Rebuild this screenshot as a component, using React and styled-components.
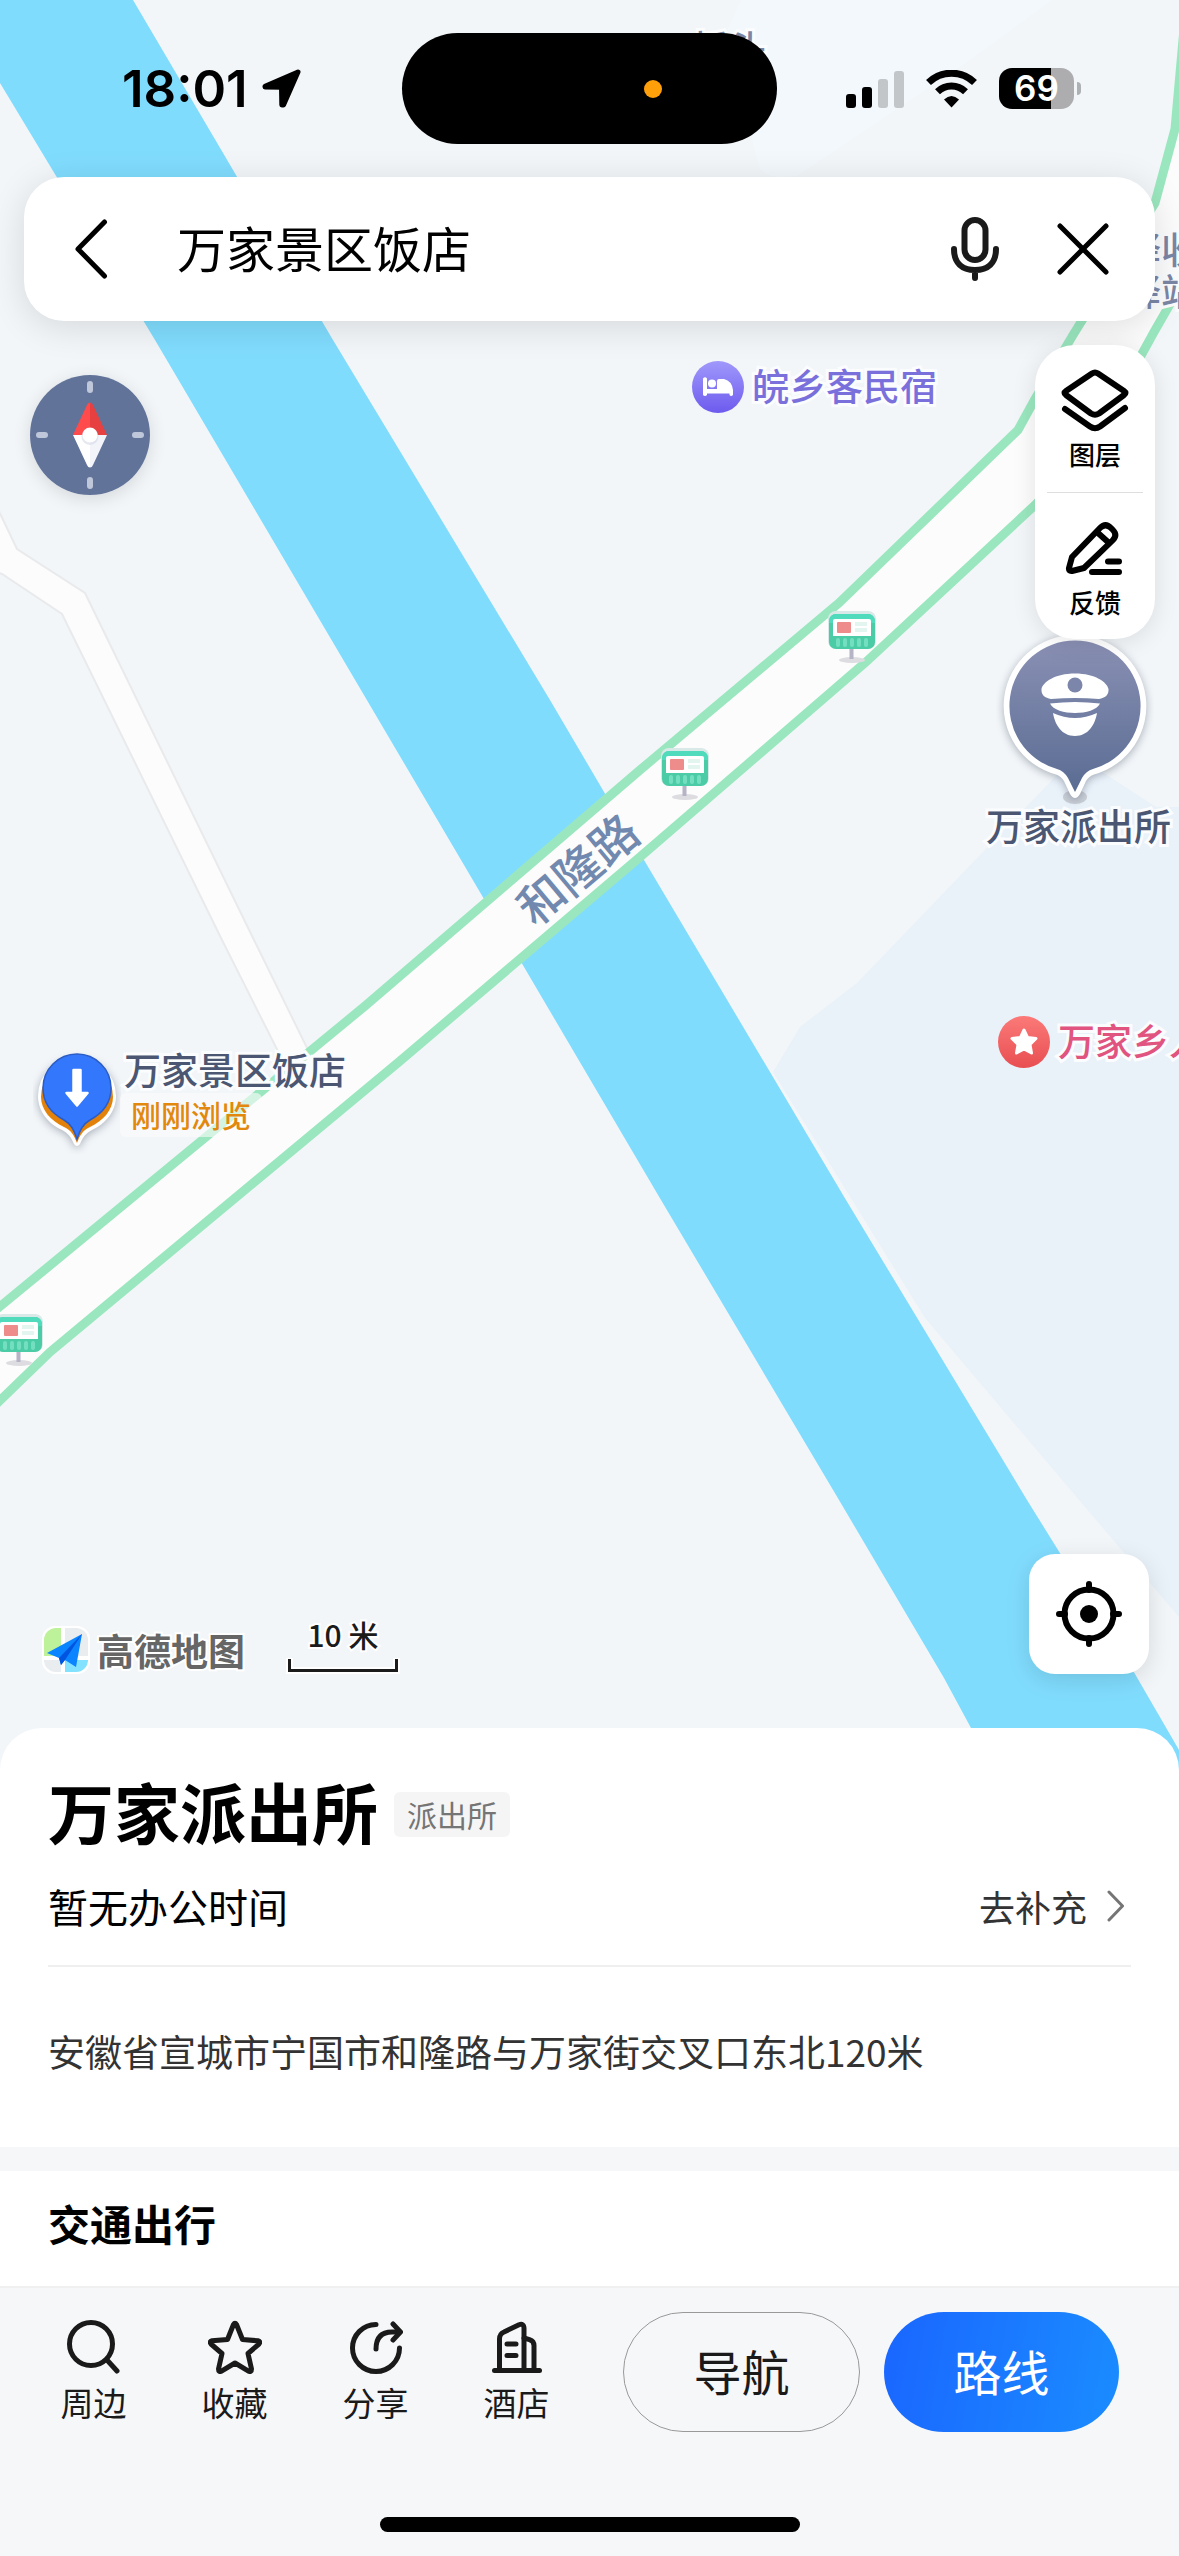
import React from 'react'
import styled, { createGlobalStyle, css } from 'styled-components'

const GlobalStyle = createGlobalStyle`
  *, *::before, *::after {
    box-sizing: border-box;
  }
  body {
    margin: 0;
    background: #f6f7f9;
    color: #000;
    font-family: 'Noto Sans CJK SC', 'Noto Sans', sans-serif;
    overflow-x: hidden;
  }
  button {
    margin: 0;
    padding: 0;
    border: 0;
    background: none;
    color: inherit;
    font: inherit;
    cursor: pointer;
  }
  svg {
    display: block;
    flex: none;
  }
`

const Page = styled.div`
  display: flex;
  flex-direction: column;
  min-height: 100vh;
`

/* ---------- map ---------- */

const MapArea = styled.main`
  position: relative;
  flex: 1;
  display: flex;
  flex-direction: column;
  padding-bottom: 102px;
  overflow: hidden;
  background: #f2f6f9;
`

const MapCanvas = styled.div`
  position: absolute;
  inset: 0;
`

const Terrain = styled.svg`
  width: 100%;
  height: 100%;
`

const Pin = styled.div`
  position: absolute;
  left: ${(p) => p.$x}px;
  top: ${(p) => p.$y}px;
  display: flex;
  align-items: center;
  gap: 8px;
`

const PlaceName = styled.span`
  padding-bottom: 4px;
  color: ${(p) => p.$color || '#4b5772'};
  font-size: 37px;
  font-weight: 500;
  line-height: 42px;
  white-space: nowrap;
  -webkit-text-stroke: 6px #fbfcfe;
  paint-order: stroke fill;
`

const RoadName = styled(PlaceName)`
  position: absolute;
  left: 507px;
  top: 846px;
  font-size: 47px;
  transform: rotate(-40deg);
  -webkit-text-stroke: 0;
`

const VisitedNote = styled.span`
  padding: 0 11px 2px;
  border-radius: 6px;
  background: rgba(252, 252, 252, 0.6);
  color: #e2880c;
  font-size: 30px;
  font-weight: 500;
  line-height: 42px;
`

/* ---------- status bar ---------- */

const StatusBar = styled.header`
  position: relative;
  display: grid;
  grid-template-columns: 1fr 375px 1fr;
  align-items: center;
  height: 177px;
  padding: 33px 0;
`

const Clock = styled.div`
  display: flex;
  align-items: center;
  gap: 14px;
  padding-left: 122px;
  font-family: Inter, 'Liberation Sans', sans-serif;
  font-size: 51px;
  font-weight: 600;
  line-height: 60px;
`

const Island = styled.div`
  display: flex;
  align-items: center;
  justify-content: flex-end;
  height: 111px;
  padding-right: 115px;
  border-radius: 56px;
  background: #000;
`

const RecordDot = styled.i`
  width: 18px;
  height: 18px;
  border-radius: 50%;
  background: #ff9f0a;
`

const Signals = styled.div`
  display: flex;
  align-items: center;
  gap: 22px;
  padding-left: 69px;
`

const Battery = styled.div`
  display: flex;
  align-items: center;
  gap: 3px;
  &::after {
    content: '';
    width: 4px;
    height: 13px;
    border-radius: 0 6px 6px 0;
    background: #aeb1b3;
  }
`

const BatteryBody = styled.div`
  width: 75px;
  height: 41px;
  border-radius: 13px;
  background: linear-gradient(90deg, #000 69%, #adadaf 69%);
  color: #fff;
  font-family: Inter, 'Liberation Sans', sans-serif;
  font-size: 35px;
  font-weight: 600;
  line-height: 41px;
  text-align: center;
`

/* ---------- floating controls ---------- */

const SearchBar = styled.form`
  position: relative;
  display: flex;
  align-items: center;
  height: 144px;
  margin: 0 24px;
  padding: 0 46px 0 51px;
  border-radius: 40px;
  background: #fff;
  box-shadow: 0 6px 36px rgba(0, 0, 0, 0.12);
`

const SearchInput = styled.input`
  flex: 1;
  min-width: 0;
  margin: 0 24px 0 69px;
  padding: 0 0 5px;
  border: 0;
  outline: 0;
  background: none;
  color: #000;
  font-family: inherit;
  font-size: 49px;
  line-height: 72px;
`

const IconButton = styled.button`
  display: flex;
  & + & {
    margin-left: 58px;
  }
`

const ControlsRow = styled.div`
  position: relative;
  display: flex;
  align-items: flex-start;
  justify-content: space-between;
  padding: 24px 24px 0 30px;
`

const CompassButton = styled.button`
  margin-top: 30px;
  border-radius: 50%;
  box-shadow: 0 4px 18px rgba(0, 0, 0, 0.12);
`

const ToolPanel = styled.div`
  display: flex;
  flex-direction: column;
  width: 120px;
  padding: 0 12px;
  border-radius: 40px;
  background: #fff;
  box-shadow: 0 4px 24px rgba(0, 0, 0, 0.1);
`

const ToolButton = styled.button`
  display: flex;
  flex-direction: column;
  align-items: center;
  gap: 4px;
  height: 147px;
  padding-top: 23px;
  font-size: 26px;
  font-weight: 500;
  line-height: 36px;
  & + & {
    border-top: 1px solid #dedede;
  }
`

const ToolIcon = styled.span`
  display: flex;
  align-items: center;
  height: 64px;
`

const MapFooter = styled.div`
  position: relative;
  display: flex;
  align-items: flex-end;
  margin-top: auto;
  padding: 0 30px 0 42px;
`

const Brand = styled.div`
  display: flex;
  align-items: center;
  gap: 7px;
  color: #666;
  font-size: 37px;
  font-weight: 700;
  line-height: 48px;
  -webkit-text-stroke: 4px #fff;
  paint-order: stroke fill;
`

const Scale = styled.div`
  display: flex;
  flex-direction: column;
  align-items: center;
  gap: 4px;
  margin: 0 auto 0 41px;
  color: #1b1b1b;
  font-size: 30px;
  font-weight: 500;
  line-height: 36px;
  -webkit-text-stroke: 4px #fff;
  paint-order: stroke fill;
`

const LocateButton = styled.button`
  display: flex;
  align-items: center;
  justify-content: center;
  width: 120px;
  height: 120px;
  border-radius: 26px;
  background: #fff;
  box-shadow: 0 6px 24px rgba(0, 0, 0, 0.12);
`

/* ---------- place sheet ---------- */

const Sheet = styled.section`
  position: relative;
  margin-top: -48px;
  padding: 42px 48px 68px;
  border-radius: 42px 42px 0 0;
  background: #fff;
`

const TitleRow = styled.div`
  display: flex;
  align-items: center;
  gap: 16px;
`

const Title = styled.h1`
  margin: 0;
  font-size: 66px;
  font-weight: 700;
  line-height: 80px;
`

const Tag = styled.span`
  padding: 0 13px;
  margin-top: 8px;
  border-radius: 6px;
  background: #f5f5f5;
  color: #757575;
  font-size: 30px;
  line-height: 45px;
`

const HoursRow = styled.div`
  display: flex;
  align-items: center;
  justify-content: space-between;
  padding: 28px 0 31px;
  border-bottom: 2px solid #efefef;
  font-size: 40px;
  line-height: 56px;
`

const AddLink = styled.a`
  display: flex;
  align-items: center;
  gap: 20px;
  padding-right: 6px;
  color: #333;
  font-size: 36px;
  text-decoration: none;
`

const Address = styled.p`
  margin: 0;
  padding-top: 56px;
  color: #333;
  font-size: 37px;
  line-height: 56px;
`

const Transit = styled.section`
  padding: 22px 48px 33px;
  border-top: 24px solid #f6f7f9;
  background: #fff;
`

const SectionTitle = styled.h2`
  margin: 0;
  font-size: 42px;
  font-weight: 700;
  line-height: 60px;
`

/* ---------- bottom bar ---------- */

const BottomBar = styled.footer`
  display: flex;
  flex-direction: column;
  align-items: center;
  padding: 24px 0;
  border-top: 2px solid #f0f0f1;
  background: #f6f7f9;
`

const Actions = styled.nav`
  display: flex;
  align-items: flex-start;
  align-self: stretch;
  gap: 24px;
  padding: 0 60px 0 23px;
`

const Tabs = styled.div`
  display: flex;
  width: 576px;
`

const Tab = styled.button`
  display: flex;
  flex-direction: column;
  align-items: center;
  gap: 4px;
  width: 141px;
  padding-top: 8px;
  color: #1a1a1a;
  font-size: 33px;
  line-height: 48px;
`

const PillButton = styled.button`
  flex: 1;
  height: 120px;
  padding-bottom: 5px;
  border-radius: 60px;
  font-size: 48px;
  line-height: 72px;
  ${(p) =>
    p.$primary
      ? css`
          background: linear-gradient(100deg, #1a66ff, #1a8cff);
          color: #fff;
        `
      : css`
          border: 1px solid #999;
          color: #1a1a1a;
        `}
`

const HomeIndicator = styled.div`
  width: 420px;
  height: 15px;
  margin-top: 85px;
  border-radius: 8px;
  background: #000;
`

/* ---------- drawings ---------- */

const Stroke = ({ w, h, width = 5, children, ...rest }) => (
  <svg
    width={w}
    height={h}
    viewBox={`0 0 ${w} ${h}`}
    fill='none'
    stroke='currentColor'
    strokeWidth={width}
    strokeLinecap='round'
    strokeLinejoin='round'
    aria-hidden='true'
    {...rest}
  >
    {children}
  </svg>
)

const NearbyIcon = () => (
  <Stroke w={54} h={54}>
    <circle cx='24' cy='24' r='21.5' />
    <path d='M40 40 50 51' />
  </Stroke>
)

const StarIcon = () => (
  <Stroke w={54} h={54}>
    <path d='M25.5 4.5Q27 2 28.5 4.5L34.5 19.5 50 20.8Q53 21.5 51 24L40 33.5 43.5 49Q43.5 52.5 40.5 51.2L27 43 13.5 51.2Q10.5 52.5 10.5 49L14 33.5 3 24Q1 21.5 4 20.8L19.5 19.5Z' />
  </Stroke>
)

const ShareIcon = () => (
  <Stroke w={54} h={54}>
    <path d='M27 4.5A23.500 23.500 0 1 0 50.500 28' />
    <path d='M27 29C27 18 32 12 43 12H50' />
    <path d='M44 4 51.500 12 44 20' />
  </Stroke>
)

const HotelIcon = () => (
  <Stroke w={54} h={54}>
    <path d='M4.500 50.500H49.500' />
    <path d='M9.500 50V19C9.500 15.500 10.500 13.500 14 12L29 4.800C32 3.600 34 4.600 34 8.500V50' />
    <path d='M34 18 39.500 19.600C42.500 20.600 44 22 44 25.500V50' />
    <path d='M17 24H26M17 35.500H26' />
  </Stroke>
)

const LayersIcon = () => (
  <Stroke w={68} h={63} width={6}>
    <path d='M31 4.500Q34 2.500 37 4.500L63 22Q66 24 63 26L38 44.500Q34 47 30 44.500L5 26Q2 24 5 22Z' />
    <path d='M4 40 29 57.500Q34 61 39 57.500L64 39' />
  </Stroke>
)

const FeedbackIcon = () => (
  <Stroke w={60} h={56} width={6}>
    <path d='M7 37 35 8Q40.500 2.500 46 8L47.500 9.500Q53 15 47.500 20.500L19 48 7 51Q3.500 51.500 4 48Z' />
    <path d='M33 13 43 22M43 41.500H54M27 52H54' />
  </Stroke>
)

const LocateIcon = () => (
  <svg width='66' height='66' viewBox='0 0 66 66' aria-hidden='true'>
    <circle cx='33' cy='33' r='24.500' fill='none' stroke='#000' strokeWidth='6' />
    <circle cx='33' cy='33' r='9' />
    <path
      d='M33 3V9M33 57V63M3 33H9M57 33H63'
      stroke='#000'
      strokeWidth='6'
      strokeLinecap='round'
    />
  </svg>
)

const Compass = () => (
  <svg width='120' height='120' viewBox='0 0 120 120' aria-hidden='true'>
    <circle cx='60' cy='60' r='60' fill='#627399' />
    <path
      d='M60 9V15M60 105V111M9 60H15M105 60H111'
      stroke='#bfc7da'
      strokeWidth='6'
      strokeLinecap='round'
    />
    <path d='M60 27.500Q58 27.500 57 30L43 60H60Z' fill='#ff4b4b' />
    <path d='M60 27.500Q62 27.500 63 30L77 60H60Z' fill='#e64040' />
    <path d='M43 60 57 90Q58 92.500 60 92.500V60Z' fill='#fff' />
    <path d='M77 60 63 90Q62 92.500 60 92.500V60Z' fill='#f3f4fa' />
    <circle cx='60' cy='61.500' r='8.500' fill='#d5d8e6' opacity='0.6' />
    <circle cx='60' cy='60' r='7.500' fill='#fff' />
  </svg>
)

const BusBoard = () => (
  <svg width='50' height='54' viewBox='0 0 50 54' aria-hidden='true'>
    <ellipse cx='25' cy='49' rx='13' ry='3' fill='#dcdce1' />
    <path d='M24.500 38V48' stroke='#b5b3c6' strokeWidth='4' />
    <rect x='1' y='0' width='48' height='38' rx='8' fill='#d9e9e7' />
    <rect x='2' y='3' width='46' height='35' rx='7' fill='#4bcba6' />
    <path d='M2 12V10A7 7 0 0 1 9 3H41A7 7 0 0 1 48 10V12Z' fill='#50dcbc' />
    <path d='M6 10Q6 8 8 8H42Q44 8 44 10V25H6Z' fill='#fff' />
    <rect x='10' y='11' width='14' height='11' rx='1' fill='#ee8b8b' />
    <path d='M28 13H40M28 19H40' stroke='#e2f5ef' strokeWidth='4' />
    <path
      d='M11 29V34M18 29V34M25 29V34M32 29V34M39 29V34'
      stroke='#74dfc0'
      strokeWidth='4'
      strokeLinecap='round'
    />
  </svg>
)

const HotelBadge = () => (
  <svg width='52' height='52' viewBox='0 0 52 52' aria-hidden='true'>
    <defs>
      <linearGradient id='stay' x2='0' y2='1'>
        <stop stopColor='#a098fb' />
        <stop offset='1' stopColor='#6d5bee' />
      </linearGradient>
    </defs>
    <circle cx='26' cy='26' r='26' fill='url(#stay)' />
    <path
      d='M11 17.500Q13 15 15 17.500V28H25V20Q25 18 27 18H32Q40 20 41 29V34Q39 36 37.500 34V32.500H15V34Q13 36 11 34Z'
      fill='#fff'
    />
    <circle cx='20' cy='22.500' r='4' fill='#fff' />
  </svg>
)

const StarBadge = () => (
  <svg width='52' height='52' viewBox='0 0 52 52' aria-hidden='true'>
    <defs>
      <linearGradient id='gov' x2='0' y2='1'>
        <stop stopColor='#fb7a78' />
        <stop offset='1' stopColor='#e84e52' />
      </linearGradient>
    </defs>
    <circle cx='26' cy='26' r='26' fill='url(#gov)' />
    <path
      d='M26 14 29.500 21.500 38 22.500 32 28.500 33.500 37 26 33 18.500 37 20 28.500 14 22.500 22.500 21.500Z'
      fill='#fff'
      stroke='#fff'
      strokeWidth='3'
      strokeLinejoin='round'
    />
  </svg>
)

const PinShadow = styled.g`
  filter: drop-shadow(0 2px 4px rgba(60, 70, 90, 0.4));
`

const PolicePin = () => (
  <svg width='158' height='180' viewBox='-4 0 158 180' aria-hidden='true'>
    <defs>
      <linearGradient id='police' x2='0' y2='1'>
        <stop stopColor='#8a90b4' />
        <stop offset='1' stopColor='#5a6c93' />
      </linearGradient>
    </defs>
    <ellipse cx='75' cy='166' rx='12' ry='7' fill='#c9ced6' />
    <PinShadow>
      <path
        d='M75 4A71 71 0 0 0 56 143.500Q61 145 64 150L70 163Q75 171 80 163L86 150Q89 145 94 143.500A71 71 0 0 0 75 4Z'
        fill='#fff'
      />
    </PinShadow>
    <path
      d='M75 9.500A65.500 65.500 0 0 0 57 138Q64 140 68 147L75 161 82 147Q86 140 93 138A65.500 65.500 0 0 0 75 9.500Z'
      fill='url(#police)'
    />
    <g fill='#fff'>
      <path d='M75 42.500C55 42.500 43 51 41.500 58 41 64 45 67 51 68Q75 66 99 68C105 67 109 64 108.500 58 107 51 95 42.500 75 42.500Z' />
      <path d='M50 72.500Q75 69.500 100 72.500C97 79 86 82 75 82S53 79 50 72.500Z' />
      <path d='M53 82Q75 92 97 82C95 94 88 105 75 105S55 94 53 82Z' />
    </g>
    <circle cx='75' cy='54' r='7.500' fill='#7c85aa' />
  </svg>
)

const VisitedPin = () => (
  <svg width='88' height='104' viewBox='-2 0 88 104' aria-hidden='true'>
    <PinShadow>
      <path
        d='M42 7A39 39 0 0 0 3 46C3 62 14 74 27 80 33 83 36 87 39 94Q42 98 45 94C48 87 51 83 57 80 70 74 81 62 81 46A39 39 0 0 0 42 7Z'
        fill='#fff'
      />
    </PinShadow>
    <path
      d='M42 11A36 36 0 0 0 6 47C6 60 16 71 29 77 36 80 39 85 42 93 45 85 48 80 55 77 68 71 78 60 78 47A36 36 0 0 0 42 11Z'
      fill='#e2820a'
    />
    <path
      d='M42 4A34 34 0 0 0 8 38C8 53 16 63 29 70 36 74 39 80 42 89 45 80 48 74 55 70 68 63 76 53 76 38A34 34 0 0 0 42 4Z'
      fill='#3377fd'
      stroke='#2a5cc4'
      strokeWidth='1.500'
    />
    <path
      d='M38.500 20H45.500V43H52.500L42 55.500 31.500 43H38.500Z'
      fill='#fff'
      stroke='#fff'
      strokeWidth='2.500'
      strokeLinejoin='round'
    />
  </svg>
)

const BrandLogo = () => (
  <svg width='48' height='48' viewBox='0 0 48 48' aria-hidden='true'>
    <rect width='48' height='48' rx='13' fill='#fff' />
    <path d='M14 2H19V30H2V14A12 12 0 0 1 14 2Z' fill='#bdf29a' />
    <path d='M23 2H34A12 12 0 0 1 46 14V30H23Z' fill='#e9edef' />
    <path d='M2 34H19V46H14A12 12 0 0 1 2 34Z' fill='#e9edef' />
    <path d='M23 34H46A12 12 0 0 1 34 46H23Z' fill='#82e2ff' />
    <path d='M40 8 5 27 17 32 19 39 23 34 34 41Z' fill='#0a84ff' />
    <path d='M40 8 17 32 19 39 23 34Z' fill='#0055e0' />
  </svg>
)

const RulerMark = () => (
  <svg width='114' height='18' viewBox='0 0 114 18' fill='none' aria-hidden='true'>
    <path d='M3.500 2V14.500H110.500V2' stroke='#fff' strokeWidth='7' />
    <path d='M3.500 3V14.500H110.500V3' stroke='#1b1b1b' strokeWidth='3' />
  </svg>
)

const LocationArrow = () => (
  <svg width='39' height='39' viewBox='0 0 39 39' aria-hidden='true'>
    <path
      d='M36 3 3 17.200V18L19.500 18.200 19.800 36H21.500Z'
      stroke='#000'
      strokeWidth='5'
      strokeLinejoin='round'
    />
  </svg>
)

const CellBars = () => (
  <svg width='58' height='38' viewBox='0 0 58 38' aria-hidden='true'>
    <rect x='0' y='24' width='10' height='14' rx='3' />
    <rect x='16' y='17' width='10' height='21' rx='3' />
    <rect x='32' y='9' width='10' height='29' rx='3' fill='#c2c6c9' />
    <rect x='48' y='1' width='10' height='37' rx='3' fill='#c2c6c9' />
  </svg>
)

const Wifi = () => (
  <svg width='51' height='38' viewBox='0 0 51 38' aria-hidden='true'>
    <g fill='none' stroke='#000' strokeWidth='7'>
      <path d='M2.500 12.500A33 33 0 0 1 48.500 12.500' />
      <path d='M11.500 21.800A20 20 0 0 1 39.500 21.800' />
    </g>
    <path d='M18 29.500Q25.500 22.500 33 29.500L25.500 37.500Z' />
  </svg>
)

const MapTerrain = () => (
  <Terrain viewBox='0 0 1179 1776' preserveAspectRatio='xMidYMin slice' aria-hidden='true'>
    <path d='M741 0 726 33 759 167Q765 180 797 176L970 60 1052 0Z' fill='#f3f8fd' />
    <path
      d='M1076 755 857 983 800 1027 773 1072 925 1318 1079 1500 1179 1617V807H1156Z'
      fill='#e9f1f9'
    />
    <path
      d='M0 0H133L333 340 550 700 644 860 846 1200 1027 1500 1135 1674 1179 1750V1776H996L971 1728 944 1678 839 1500 661 1200 484 899 155 340 0 83Z'
      fill='#80dcfd'
    />
    <path
      d='M-4 505 17 549 85 593 254 940 340 1115 310 1115 222 940 62 614 2 574-4 572Z'
      fill='#fcfcfc'
      stroke='#e9eaec'
      strokeWidth='2'
    />
    <path
      d='M-20 1323 365 1006 640 770 839 603 1018 430 1035 399 1073 335 1155 203 1175 129 1183 40 1260 40 1260 160 1185 278 1154 332 1092 445 1035 505 866 662 640 857 400 1061 50 1352-20 1420Z'
      fill='#fcfcfc'
      stroke='#9ae7bf'
      strokeWidth='9'
    />
  </Terrain>
)

/* ---------- data ---------- */

const boards = [
  { x: 827, y: 611 },
  { x: 660, y: 748 },
  { x: -6, y: 1314 },
]

const tabs = [
  { label: '周边', Icon: NearbyIcon },
  { label: '收藏', Icon: StarIcon },
  { label: '分享', Icon: ShareIcon },
  { label: '酒店', Icon: HotelIcon },
]

const MapView = () => (
  <MapCanvas>
    <MapTerrain />
    <RoadName $color='#7189ae'>和隆路</RoadName>
    {boards.map(({ x, y }) => (
      <Pin key={x} $x={x} $y={y}>
        <BusBoard />
      </Pin>
    ))}
    <Pin $x={692} $y={26}>
      <PlaceName $color='#7b86a5'>桥头</PlaceName>
    </Pin>
    <Pin $x={1124} $y={227}>
      <PlaceName $color='#7b86a5'>
        驿收
        <br />
        驿站
      </PlaceName>
    </Pin>
    <Pin $x={692} $y={361}>
      <HotelBadge />
      <PlaceName $color='#7a70dc'>皖乡客民宿</PlaceName>
    </Pin>
    <Pin $x={996} $y={631}>
      <PolicePin />
    </Pin>
    <Pin $x={986} $y={804}>
      <PlaceName>万家派出所</PlaceName>
    </Pin>
    <Pin $x={998} $y={1016}>
      <StarBadge />
      <PlaceName $color='#e0547f'>万家乡人</PlaceName>
    </Pin>
    <Pin $x={33} $y={1050}>
      <VisitedPin />
    </Pin>
    <Pin $x={124} $y={1048}>
      <PlaceName>万家景区饭店</PlaceName>
    </Pin>
    <Pin $x={120} $y={1093}>
      <VisitedNote>刚刚浏览</VisitedNote>
    </Pin>
  </MapCanvas>
)

const App = () => {
  return (
    <Page>
      <GlobalStyle />
      <MapArea>
        <MapView />
        <StatusBar>
          <Clock>
            18:01
            <LocationArrow />
          </Clock>
          <Island>
            <RecordDot />
          </Island>
          <Signals>
            <CellBars />
            <Wifi />
            <Battery>
              <BatteryBody>69</BatteryBody>
            </Battery>
          </Signals>
        </StatusBar>
        <SearchBar onSubmit={(e) => e.preventDefault()}>
          <IconButton type='button' aria-label='返回'>
            <Stroke w={33} h={60} width={5}>
              <path d='M29.500 3 3 30 29.500 57' />
            </Stroke>
          </IconButton>
          <SearchInput aria-label='搜索地点' defaultValue='万家景区饭店' />
          <IconButton type='button' aria-label='语音搜索'>
            <Stroke w={48} h={66} width={6} color='#1a1a1a'>
              <rect x='13.500' y='4' width='21' height='40' rx='10.500' />
              <path d='M3 33C3 47 11 54 24 54S45 47 45 33M24 55V62' />
            </Stroke>
          </IconButton>
          <IconButton type='button' aria-label='清除'>
            <Stroke w={52} h={52} width={5}>
              <path d='M3 3 49 49M49 3 3 49' />
            </Stroke>
          </IconButton>
        </SearchBar>
        <ControlsRow>
          <CompassButton type='button' aria-label='指南针'>
            <Compass />
          </CompassButton>
          <ToolPanel>
            <ToolButton type='button'>
              <ToolIcon>
                <LayersIcon />
              </ToolIcon>
              图层
            </ToolButton>
            <ToolButton type='button'>
              <ToolIcon>
                <FeedbackIcon />
              </ToolIcon>
              反馈
            </ToolButton>
          </ToolPanel>
        </ControlsRow>
        <MapFooter>
          <Brand>
            <BrandLogo />
            高德地图
          </Brand>
          <Scale>
            10 米
            <RulerMark />
          </Scale>
          <LocateButton type='button' aria-label='定位'>
            <LocateIcon />
          </LocateButton>
        </MapFooter>
      </MapArea>
      <Sheet>
        <TitleRow>
          <Title>万家派出所</Title>
          <Tag>派出所</Tag>
        </TitleRow>
        <HoursRow>
          暂无办公时间
          <AddLink href='#hours'>
            去补充
            <Stroke w={18} h={32} width={3} color='#757575'>
              <path d='M2 2 15.500 16 2 30' />
            </Stroke>
          </AddLink>
        </HoursRow>
        <Address>安徽省宣城市宁国市和隆路与万家街交叉口东北120米</Address>
      </Sheet>
      <Transit>
        <SectionTitle>交通出行</SectionTitle>
      </Transit>
      <BottomBar>
        <Actions>
          <Tabs>
            {tabs.map(({ label, Icon }) => (
              <Tab key={label} type='button'>
                <Icon />
                {label}
              </Tab>
            ))}
          </Tabs>
          <PillButton type='button'>导航</PillButton>
          <PillButton type='button' $primary>
            路线
          </PillButton>
        </Actions>
        <HomeIndicator />
      </BottomBar>
    </Page>
  )
}

export default App
